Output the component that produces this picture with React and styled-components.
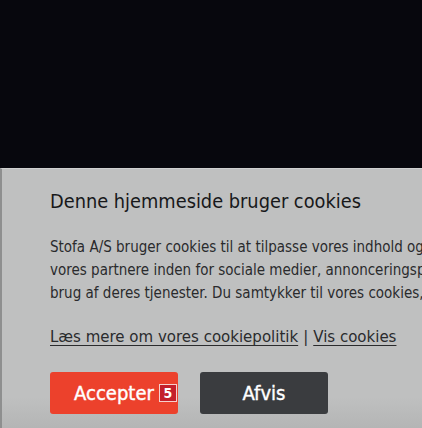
import React from 'react';
import styled, { createGlobalStyle } from 'styled-components';

const GlobalStyle = createGlobalStyle`
  html, body {
    margin: 0;
    padding: 0;
    background: #07070d;
    overflow: hidden;
  }
  body {
    font-family: "DejaVu Sans Condensed", "DejaVu Sans", sans-serif;
  }
`;

const lines = [
  'Stofa A/S bruger cookies til at tilpasse vores indhold og annoncer, til at vise dig funktioner',
  'vores partnere inden for sociale medier, annonceringspartnere og analysepartnere, der',
  'brug af deres tjenester. Du samtykker til vores cookies, hvis du fortsætter med at anvende',
];

const App = () => {
  return (
    <Page>
      <GlobalStyle />
      <Backdrop />
      <Banner>
        <Title>Denne hjemmeside bruger cookies</Title>
        <Body>
          {lines.map((line, i) => (
            <Line key={i}>{line}</Line>
          ))}
        </Body>
        <Links>
          <Link>Læs mere om vores cookiepolitik</Link>
          <Divider>|</Divider>
          <Link>Vis cookies</Link>
        </Links>
        <Buttons>
          <Button $variant="accept">
            <Label>
              Accepter
              <Badge>5</Badge>
            </Label>
          </Button>
          <Button $variant="decline">
            <Label>Afvis</Label>
          </Button>
        </Buttons>
      </Banner>
    </Page>
  );
};

export default App;

const Page = styled.div`
  width: 422px;
  height: 428px;
  overflow: hidden;
  display: flex;
  flex-direction: column;
`;

const Backdrop = styled.div`
  height: 168px;
  flex-shrink: 0;
  background: #07070d;
`;

const Banner = styled.div`
  flex: 1;
  background: linear-gradient(to bottom, #bfc0c0 0%, #bfc0c0 88%, #b4b5b5 100%);
  border-top: 1px solid #cfd0d0;
  border-left: 2px solid #8e8f8f;
  padding: 21px 0 0 48px;
  color: #1e1f21;
`;

const Title = styled.h2`
  margin: 0;
  font-size: 19.8px;
  line-height: 24px;
  font-weight: normal;
  color: #17181a;
`;

const Body = styled.div`
  margin-top: 22px;
  font-size: 15px;
  line-height: 23px;
  color: #2a2b2d;
`;

const Line = styled.div`
  white-space: nowrap;
`;

const Links = styled.div`
  margin-top: 20px;
  font-size: 16.7px;
  line-height: 23px;
  color: #2a2b2d;
  white-space: nowrap;
  display: flex;
  gap: 5px;
`;

const Link = styled.span`
  text-decoration: underline;
  text-underline-offset: 3px;
`;

const Divider = styled.span``;

const Buttons = styled.div`
  margin-top: 24px;
  display: flex;
  gap: 22px;
`;

const Button = styled.button`
  width: 128px;
  height: 42px;
  border: none;
  border-radius: 3px;
  display: flex;
  align-items: center;
  justify-content: center;
  font-family: "DejaVu Sans Condensed", "DejaVu Sans", sans-serif;
  font-size: 20px;
  font-weight: normal;
  -webkit-text-stroke: 0.4px #ffffff;
  color: #ffffff;
  background: ${(p) => (p.$variant === 'accept' ? '#ec412c' : '#3a3c3f')};
`;

const Label = styled.span`
  position: relative;
`;

const Badge = styled.span`
  position: absolute;
  left: calc(100% + 5px);
  top: 50%;
  transform: translateY(-50%);
  width: 16px;
  height: 16px;
  border: 1px solid #f6d0cc;
  background: #c41f2b;
  color: #fff;
  font-size: 14px;
  line-height: 16px;
  text-align: center;
  font-weight: bold;
  -webkit-text-stroke: 0;
`;
